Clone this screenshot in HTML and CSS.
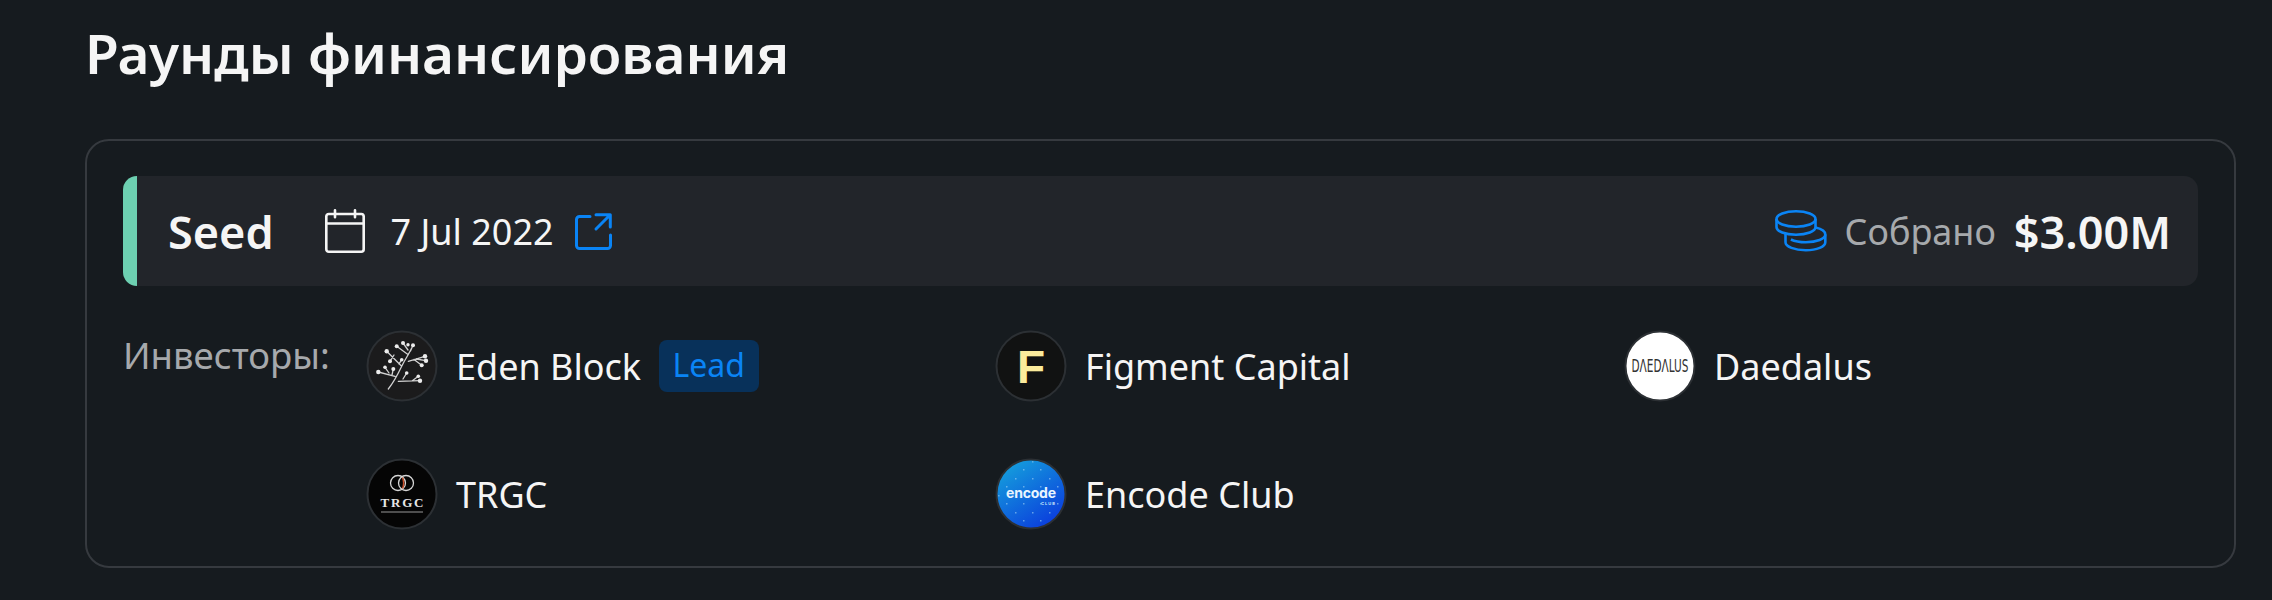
FILE: index.html
```html
<!DOCTYPE html>
<html lang="en">
<head>
    <meta charset="UTF-8">
    <title>Раунды финансирования</title>
    <link rel="stylesheet" href="styles.css">
</head>
<body>
    <h1 class="page-title">Раунды финансирования</h1>

    <div class="round-card">
        <div class="round-bar">
            <div class="round-left">
                <span class="round-name">Seed</span>
                <svg class="icon-calendar" viewBox="0 0 40 44" fill="none" stroke="#f5f5f5" stroke-width="2.6" stroke-linecap="round" stroke-linejoin="round">
                    <rect x="1.3" y="5" width="37.4" height="37.7" rx="2.5"/>
                    <path d="M1.3 14.5h37.4M10 1.3v7M30 1.3v7"/>
                </svg>
                <span class="round-date">7 Jul 2022</span>
                <svg class="icon-link" viewBox="0 0 37 37" fill="none" stroke="#0a84f5" stroke-width="3" stroke-linecap="round" stroke-linejoin="round">
                    <path d="M15 3.5H4.5a3 3 0 0 0-3 3v26a3 3 0 0 0 3 3h28a3 3 0 0 0 3-3V22"/>
                    <path d="M21 1.7h14.3V14M34.5 2.500L21 16"/>
                </svg>
            </div>
            <div class="round-right">
                <svg class="icon-coins" viewBox="0 0 52 42" fill="none" stroke="#0a84f5" stroke-width="2.6" stroke-linejoin="round">
                    <ellipse cx="21" cy="9" rx="19.5" ry="7.7"/>
                    <path d="M1.5 9v8c0 4.3 8.7 7.700 19.500 7.700S40.500 21.300 40.500 17V9"/>
                    <path d="M40.500 17.500c5.800 1.300 9.800 3.900 9.800 7 0 4.300-8.700 7.700-19.500 7.700-6 0-11.300-1-14.900-2.700"/>
                    <path d="M10.500 23v9.300c0 4.300 9 8 20.300 8s19.500-3.700 19.500-8v-7.800"/>
                </svg>
                <span class="raised-label">Собрано</span>
                <span class="raised-value">$3.00M</span>
            </div>
        </div>

        <div class="investors">
            <div class="investors-label">Инвесторы:</div>
            <div class="investors-grid">
                <div class="investor">
                    <svg class="avatar" viewBox="0 0 72 72">
                        <circle cx="36" cy="36" r="34.500" fill="#1b1b1c" stroke="#2c3034" stroke-width="2"/>
                        <path d="M22.300 59C28 52 32 44 35.700 36.300S43 24 45.700 18M30.700 16.300L42.300 24.700M37 13L42 20M47 15.300L44.500 21M42.300 31.300L59 26.300M60 30.700L50 29M55.700 35.300L48 29.500M20.700 21.300L35.700 36.300M24 31.300L28 25M35.700 29.700L33 34M12.300 42L29 46.300M19 37.300L23 43M27.300 39L26 45M32.300 51.300L54 50.700M52.300 46.300L46 51M40.700 43L37 49" fill="none" stroke="#d2d2d2" stroke-width="1.300" stroke-linecap="round"/>
                        <g fill="#ececec">
                            <circle cx="30.700" cy="16.300" r="2"/><circle cx="37" cy="13" r="2"/><circle cx="42" cy="14.700" r="1.700"/><circle cx="47" cy="15.300" r="2"/>
                            <circle cx="20.700" cy="21.300" r="2.200"/><circle cx="24" cy="31.300" r="2"/><circle cx="35.700" cy="29.700" r="1.800"/><circle cx="59" cy="26.300" r="2.200"/>
                            <circle cx="60" cy="30.700" r="2.200"/><circle cx="55.700" cy="35.300" r="2"/><circle cx="12.300" cy="42" r="2.200"/><circle cx="19" cy="37.300" r="1.800"/>
                            <circle cx="27.300" cy="39" r="2"/><circle cx="40.700" cy="43" r="1.800"/><circle cx="54" cy="50.700" r="2.200"/><circle cx="52.300" cy="46.300" r="1.800"/>
                        </g>
                    </svg>
                    <span class="investor-name">Eden Block</span>
                    <span class="lead-tag">Lead</span>
                </div>
                <div class="investor">
                    <svg class="avatar" viewBox="0 0 72 72">
                        <circle cx="36" cy="36" r="34.500" fill="#111212" stroke="#2c3034" stroke-width="2"/>
                        <text class="logo-f" x="36" y="53" text-anchor="middle">F</text>
                    </svg>
                    <span class="investor-name">Figment Capital</span>
                </div>
                <div class="investor">
                    <svg class="avatar" viewBox="0 0 72 72">
                        <circle cx="36" cy="36" r="34.500" fill="#ffffff" stroke="#2c3034" stroke-width="2"/>
                        <text class="logo-daedalus" transform="translate(36 42) scale(0.62 1)" text-anchor="middle">DΛEDΛLUS</text>
                    </svg>
                    <span class="investor-name">Daedalus</span>
                </div>
                <div class="investor">
                    <svg class="avatar" viewBox="0 0 72 72">
                        <circle cx="36" cy="36" r="34.500" fill="#050505" stroke="#2c3034" stroke-width="2"/>
                        <circle cx="32" cy="25" r="7.500" fill="none" stroke="#d6d6d6" stroke-width="1.300"/>
                        <circle cx="40" cy="25" r="7.500" fill="none" stroke="#d6d6d6" stroke-width="1.300"/>
                        <path d="M36.500 19.500c1.500 3.500 1.500 7.500 0 11" fill="none" stroke="#c8502c" stroke-width="1.500"/>
                        <text class="logo-trgc" x="36" y="49" text-anchor="middle" textLength="43">TRGC</text>
                        <path d="M15 54h42" stroke="#bdbdbd" stroke-width="0.800"/>
                    </svg>
                    <span class="investor-name">TRGC</span>
                </div>
                <div class="investor">
                    <svg class="avatar" viewBox="0 0 72 72">
                        <defs>
                            <linearGradient id="encodeGrad" x1="0.150" y1="0" x2="0.850" y2="1">
                                <stop offset="0" stop-color="#15a3dc"/>
                                <stop offset="1" stop-color="#0a36dd"/>
                            </linearGradient>
                            <pattern id="encodeDots" width="17" height="17" patternUnits="userSpaceOnUse">
                                <rect x="3" y="3" width="1.500" height="1.500" fill="#9fd0f5" opacity="0.600"/>
                                <rect x="11" y="11" width="1.500" height="1.500" fill="#9fd0f5" opacity="0.600"/>
                            </pattern>
                        </defs>
                        <circle cx="36" cy="36" r="34.500" fill="url(#encodeGrad)" stroke="#2c3034" stroke-width="2"/>
                        <circle cx="36" cy="36" r="33" fill="url(#encodeDots)"/>
                        <text class="logo-encode" x="36" y="40" text-anchor="middle" textLength="50">encode</text>
                        <text class="logo-club" x="53" y="46.500" text-anchor="middle" textLength="14">CLUB</text>
                    </svg>
                    <span class="investor-name">Encode Club</span>
                </div>
            </div>
        </div>
    </div>
</body>
</html>
```

FILE: styles.css
```css
body {
    margin: 0;
    padding: 0 36px 0 85px;
    background-color: #161b1f;
    color: #f5f5f5;
    font-family: "Noto Sans", Arial, sans-serif;
}

.page-title {
    margin: 0;
    padding-top: 18px;
    height: 139px;
    box-sizing: border-box;
    font-size: 55px;
    line-height: 70px;
    font-weight: 600;
}

.round-card {
    height: 429px;
    box-sizing: border-box;
    padding: 35px 36px 0;
    border: 2px solid #363a3f;
    border-radius: 24px;
}

.round-bar {
    height: 110px;
    box-sizing: border-box;
    display: flex;
    justify-content: space-between;
    align-items: center;
    padding: 0 27px 0 31px;
    background-color: #22252a;
    border-left: 14px solid #6dd0b1;
    border-radius: 14px;
}

.round-left, .round-right {
    display: flex;
    align-items: center;
}

.round-name {
    font-size: 45px;
    font-weight: 600;
    margin-right: 51px;
}

.icon-calendar {
    width: 40px;
    height: 44px;
    margin-right: 26px;
}

.round-date {
    font-size: 36px;
    margin-right: 21px;
}

.icon-link {
    width: 37px;
    height: 37px;
}

.icon-coins {
    width: 52px;
    height: 42px;
    margin-right: 18px;
}

.raised-label {
    font-size: 36px;
    color: #a6a9ac;
    margin-right: 18px;
}

.raised-value {
    font-size: 45px;
    font-weight: 600;
}

.investors {
    display: flex;
    margin-top: 44px;
}

.investors-label {
    flex: 0 0 243px;
    font-size: 36.5px;
    line-height: 50px;
    color: #a6a9ac;
}

.investors-grid {
    flex: 1;
    min-width: 0;
    display: grid;
    grid-template-columns: 629px 629px 1fr;
    row-gap: 56px;
}

.investor {
    display: flex;
    align-items: center;
    height: 72px;
}

.avatar {
    width: 72px;
    height: 72px;
    margin-right: 18px;
}

.investor-name {
    font-size: 36px;
}

.lead-tag {
    margin-left: 18px;
    padding: 0 13.5px;
    height: 52px;
    line-height: 50px;
    font-size: 32px;
    color: #0a84f5;
    background-color: #08315a;
    border-radius: 8px;
}

.logo-f {
    font-family: "Liberation Sans", Arial, sans-serif;
    font-size: 46px;
    font-weight: 700;
    fill: #fbeb9c;
}

.logo-daedalus {
    font-family: "DejaVu Sans", sans-serif;
    font-size: 17px;
    fill: #333333;
}

.logo-trgc {
    font-family: "Liberation Serif", serif;
    font-size: 13px;
    font-weight: 700;
    fill: #e6e6e6;
}

.logo-encode {
    font-family: Inter, sans-serif;
    font-size: 14px;
    font-weight: 700;
    fill: #e8f4ff;
}

.logo-club {
    font-family: Inter, sans-serif;
    font-size: 4px;
    font-weight: 700;
    fill: #cfe6fb;
}
```
